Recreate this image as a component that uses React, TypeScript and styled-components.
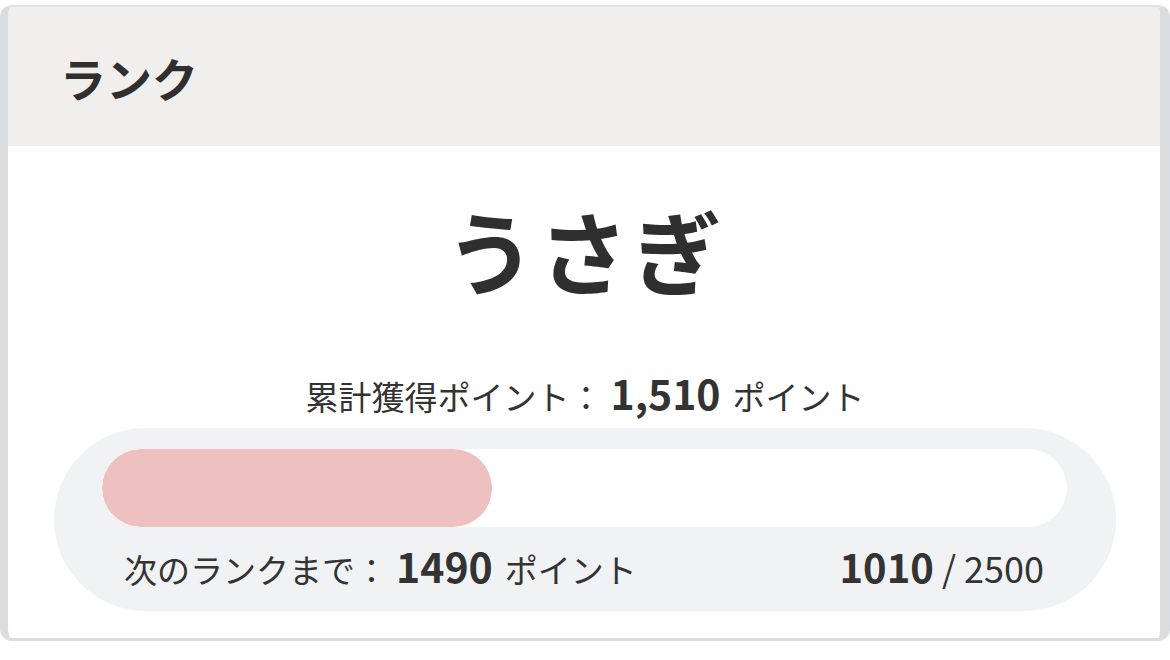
import styled, { createGlobalStyle } from "styled-components";

const current = 1010;
const target = 2500;

const GlobalStyle = createGlobalStyle`
  html, body {
    margin: 0;
    padding: 0;
    background: #ffffff;
  }
  body {
    font-family: "Noto Sans CJK JP", "Noto Sans", sans-serif;
    color: #333333;
  }
`;

const Page = styled.div`
  width: 1170px;
  height: 660px;
  padding-top: 5px;
  box-sizing: border-box;
`;

const Card = styled.section`
  width: 1170px;
  box-sizing: border-box;
  border-style: solid;
  border-color: #dadde0;
  border-width: 2px 10px 3px 8px;
  border-top-color: #e2e2e2;
  border-bottom-color: #dcdcdc;
  border-radius: 12px;
  overflow: hidden;
  background: #ffffff;
`;

const Header = styled.header`
  height: 139px;
  background: #f0efee;
  display: flex;
  align-items: center;
  padding-left: 52px;
`;

const Title = styled.h2`
  margin: 0;
  font-size: 46px;
  font-weight: 700;
  color: #2f2f2f;
`;

const Body = styled.div`
  display: flex;
  flex-direction: column;
  align-items: center;
  padding: 58px 44px 27px 46px;
`;

const RankName = styled.div`
  font-size: 90px;
  font-weight: 700;
  line-height: 1;
  color: #2f2f2f;
  letter-spacing: 3px;
`;

const Total = styled.div`
  margin-top: 78px;
  font-size: 33px;
  line-height: 40px;
  display: flex;
  align-items: baseline;
`;

const Strong = styled.span<{ $size: number }>`
  font-size: ${(p) => p.$size}px;
  font-weight: 700;
  line-height: 1;
  margin: 0 12px 0 8px;
`;

const Panel = styled.div`
  align-self: stretch;
  margin-top: 12px;
  background: #f1f2f4;
  border-radius: 92px;
  padding: 21px 49px 16px 48px;
`;

const Track = styled.div`
  height: 78px;
  border-radius: 39px;
  background: #ffffff;
  overflow: hidden;
`;

const Fill = styled.div`
  height: 100%;
  background: #eec0c0;
  border-radius: 39px;
`;

const Footer = styled.div`
  display: flex;
  justify-content: space-between;
  align-items: baseline;
  padding: 14px 23px 0 22px;
  font-size: 33px;
  line-height: 52px;
  height: 68px;
  box-sizing: border-box;
`;

const Label = styled.div`
  display: flex;
  align-items: baseline;
`;

const Ratio = styled.div`
  font-size: 36px;
  display: flex;
  align-items: baseline;
`;

const RatioNum = styled.span`
  font-size: 40px;
  font-weight: 700;
  line-height: 1;
  margin-right: 8px;
`;

export default function App() {
  const pct = (current / target) * 100;
  return (
    <Page>
      <GlobalStyle />
      <Card>
        <Header>
          <Title>ランク</Title>
        </Header>
        <Body>
          <RankName>うさぎ</RankName>
          <Total>
            累計獲得ポイント：<Strong $size={41}>1,510</Strong>ポイント
          </Total>
          <Panel>
            <Track>
              <Fill style={{ width: `${pct}%` }} />
            </Track>
            <Footer>
              <Label>
                次のランクまで：<Strong $size={41}>1490</Strong>ポイント
              </Label>
              <Ratio>
                <RatioNum>1010</RatioNum>/ 2500
              </Ratio>
            </Footer>
          </Panel>
        </Body>
      </Card>
    </Page>
  );
}
